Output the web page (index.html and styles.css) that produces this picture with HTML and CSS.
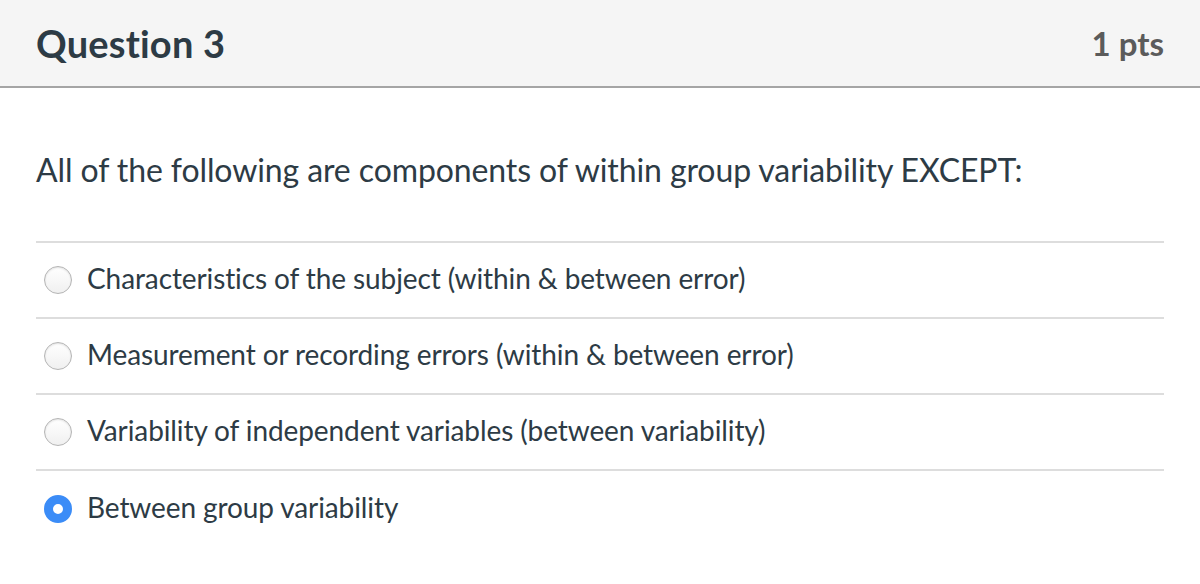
FILE: index.html
```html
<!DOCTYPE html>
<html>
<head>
<meta charset="utf-8">
<link rel="stylesheet" href="styles.css">
</head>
<body>
<div class="question">
  <div class="header">
    <h2 class="title">Question 3</h2>
    <div class="pts">1 pts</div>
  </div>
  <div class="body">
    <p class="prompt">All of the following are components of within group variability EXCEPT:</p>
    <div class="answers">
      <label class="answer"><span class="radio"></span><span class="label">Characteristics of the subject (within &amp; between error)</span></label>
      <label class="answer"><span class="radio"></span><span class="label">Measurement or recording errors (within &amp; between error)</span></label>
      <label class="answer"><span class="radio"></span><span class="label">Variability of independent variables (between variability)</span></label>
      <label class="answer"><span class="radio checked"></span><span class="label">Between group variability</span></label>
    </div>
  </div>
</div>
</body>
</html>
```
FILE: styles.css
```css
* { box-sizing: border-box; }
body {
  margin: 0;
  background: #fff;
  font-family: Lato, "Noto Sans", sans-serif;
  color: #2d3b45;
}
.header {
  height: 88px;
  background: #f5f5f5;
  border-bottom: 2px solid #a5a5a5;
  display: flex;
  align-items: center;
  justify-content: space-between;
  padding: 0 36px 0 36px;
}
.title {
  margin: 0;
  font-size: 38px;
  font-weight: 700;
  color: #2d3b45;
  letter-spacing: 0.2px;
}
.pts {
  font-size: 33px;
  font-weight: 700;
  color: #5b5b5b;
}
.body {
  padding: 0 36px;
}
.prompt {
  margin: 0;
  padding-top: 64px;
  font-size: 32px;
  line-height: 36px;
  letter-spacing: -0.1px;
}
.answers {
  margin-top: 53px;
  border-top: 2px solid #dddddd;
}
.answer {
  display: flex;
  align-items: center;
  height: 76px;
  border-bottom: 2px solid #dddddd;
  padding-left: 8px;
}
.answer:last-child { border-bottom: none; }
.radio {
  width: 28px;
  height: 28px;
  border-radius: 50%;
  border: 1px solid #b5b5b5;
  background: linear-gradient(#fff, #f0f0f0);
  box-shadow: inset 0 1px 2px rgba(0,0,0,0.12);
  margin-right: 15px;
  flex: none;
}
.radio.checked {
  border: 9px solid #3b8cf7;
  background: #fff;
  box-shadow: none;
}
.label {
  font-size: 28px;
  letter-spacing: -0.1px;
  padding-bottom: 5px;
}
```
